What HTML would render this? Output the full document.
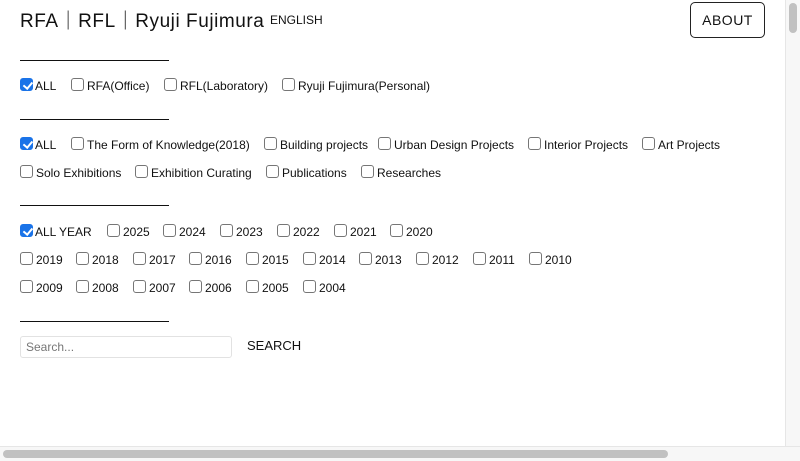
<!DOCTYPE html>
<html><head><meta charset="utf-8"><style>
*{margin:0;padding:0;box-sizing:border-box}
body{width:800px;height:461px;position:relative;background:#fff;font-family:"Liberation Sans",Arial,sans-serif;color:#111;overflow:hidden}
.t{position:absolute;font-size:12px;line-height:14px;white-space:nowrap}
.c{position:absolute;width:13px;height:13px;border:1px solid #767676;border-radius:3px;background:#fff}
.c.k{background:#1a73e8;border-color:#1a73e8}
.c.k::after{content:"";position:absolute;left:3.5px;top:0.5px;width:3.5px;height:7px;border:solid #fff;border-width:0 2px 2px 0;transform:rotate(40deg)}
.l{position:absolute;left:20px;width:149px;height:1px;background:#111}
</style></head><body>
<div class="t" style="left:20px;top:10px;font-size:19px;line-height:24px;letter-spacing:0.55px">RFA｜RFL｜Ryuji Fujimura</div>
<div class="t" style="left:270px;top:13px;font-size:12px">ENGLISH</div>
<div style="position:absolute;left:690px;top:2px;width:75px;height:36px;border:1px solid #222;border-radius:5px;font-size:14px;letter-spacing:0.5px;text-align:center;line-height:34px">ABOUT</div>
<div class="l" style="top:60px"></div>
<div class="l" style="top:119px"></div>
<div class="l" style="top:205px"></div>
<div class="l" style="top:321px"></div>
<div id="rows"></div>
<div style="position:absolute;left:20px;top:336px;width:212px;height:22px;border:1px solid #e2e2e2;border-radius:3px;font-size:12px;color:#777;padding-left:5px;line-height:20px">Search...</div>
<div class="t" style="left:247px;top:339px;font-size:13px">SEARCH</div>
<div style="position:absolute;left:785px;top:0;width:15px;height:446px;background:#f7f7f7;border-left:1px solid #e6e6e6"></div>
<div style="position:absolute;left:789px;top:3px;width:8px;height:30px;background:#c1c1c1;border-radius:4px"></div>
<div style="position:absolute;left:0;top:446px;width:800px;height:15px;background:#f7f7f7;border-top:1px solid #e6e6e6"></div>
<div style="position:absolute;left:3px;top:450px;width:665px;height:8px;background:#c1c1c1;border-radius:4px"></div>
<script>
var R=[[85,[[20,35,"ALL",1],[71,87,"RFA(Office)"],[164,180,"RFL(Laboratory)"],[282,298,"Ryuji Fujimura(Personal)"]]],
[144,[[20,35,"ALL",1],[71,87,"The Form of Knowledge(2018)"],[264,280,"Building projects"],[378,394,"Urban Design Projects"],[528,544,"Interior Projects"],[642,658,"Art Projects"]]],
[172,[[20,36,"Solo Exhibitions"],[135,151,"Exhibition Curating"],[266,282,"Publications"],[361,377,"Researches"]]],
[231,[[20,35,"ALL YEAR",1],[107,123,"2025"],[163,179,"2024"],[220,236,"2023"],[277,293,"2022"],[334,350,"2021"],[390,406,"2020"]]],
[259,[[20,36,"2019"],[76,92,"2018"],[133,149,"2017"],[189,205,"2016"],[246,262,"2015"],[303,319,"2014"],[359,375,"2013"],[416,432,"2012"],[473,489,"2011"],[529,545,"2010"]]],
[287,[[20,36,"2009"],[76,92,"2008"],[133,149,"2007"],[189,205,"2006"],[246,262,"2005"],[303,319,"2004"]]]];
var h="";R.forEach(function(r){var y=r[0];r[1].forEach(function(i){h+='<div class="c'+(i[3]?' k':'')+'" style="left:'+i[0]+'px;top:'+(y-7)+'px"></div><div class="t" style="left:'+i[1]+'px;top:'+(y-6)+'px">'+i[2]+'</div>';});});
document.getElementById("rows").innerHTML=h;
</script>
</body></html>
